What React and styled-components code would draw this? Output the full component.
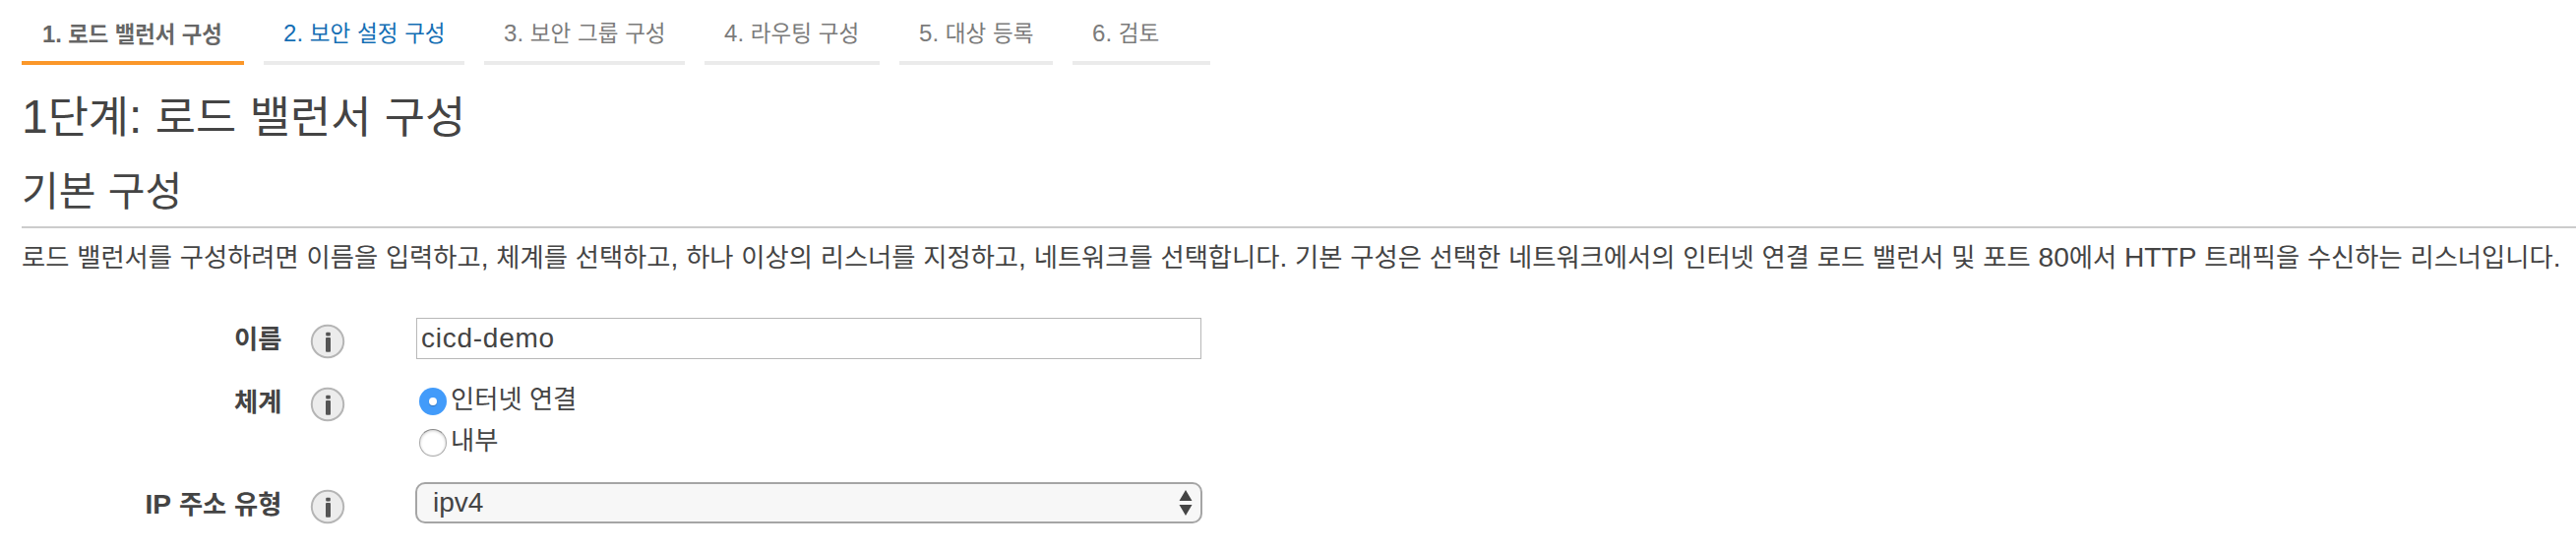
import React from "react";
import styled, { createGlobalStyle } from "styled-components";

const GlobalStyle = createGlobalStyle`
  * { box-sizing: border-box; }
  body { margin: 0; background: #fff; overflow: hidden; }
`;

const Page = styled.main`
  height: 560px;
  padding-left: 22px;
  color: #444;
  font-family: "Liberation Sans", "Noto Sans CJK KR", sans-serif;
  font-size: 26.3px;
  white-space: nowrap;
  overflow: hidden;
`;

const Latin = styled.span`
  font-size: 1.07em;
`;

const Steps = styled.nav`
  display: flex;
  gap: 20px;
  height: 66px;
`;

const Step = styled.div`
  width: ${(p) => p.$width}px;
  height: 66px;
  padding: ${(p) => (p.$active ? "18px 0 0 21px" : "17px 0 0 20px")};
  border-bottom: 4px solid ${(p) => (p.$active ? "#fb9729" : "#ebebeb")};
  color: ${(p) => p.$color};
  font-size: ${(p) => (p.$active ? 22.3 : 22.5)}px;
  font-weight: ${(p) => (p.$active ? 700 : 400)};
  line-height: 34px;
  word-spacing: ${(p) => (p.$active ? 0.2 : 0.5)}px;
`;

const Title = styled.h1`
  margin: 23px 0 0;
  font-size: 44.8px;
  font-weight: 400;
  line-height: 60px;
  word-spacing: 1px;
`;

const SectionTitle = styled.h2`
  margin: 15px 0 0;
  height: 68px;
  border-bottom: 2px solid #ccc;
  font-size: 41px;
  font-weight: 400;
  line-height: 62px;
  word-spacing: 1px;
`;

const Description = styled.p`
  margin: 10px 0 0;
  height: 40px;
  line-height: 40px;
  word-spacing: 0.5px;
`;

const Form = styled.form`
  display: flex;
  flex-direction: column;
  margin-top: 41px;
`;

const Row = styled.div`
  display: flex;
  align-items: flex-start;
  height: ${(p) => p.$height}px;
`;

const Heading = styled.div`
  display: flex;
  align-items: flex-start;
  width: 400px;
  padding-top: ${(p) => p.$drop || 0}px;
`;

const Label = styled.label`
  width: 264.5px;
  padding-top: 1px;
  font-weight: 700;
  line-height: 42px;
  text-align: right;
  word-spacing: 0.5px;
`;

const InfoIcon = styled.svg`
  display: block;
  width: 36px;
  height: 36px;
  margin: 6px 0 0 28.5px;
`;

const TextInput = styled.input`
  width: 798px;
  height: 42px;
  margin-left: 1px;
  padding: 0 4px;
  border: 1px solid #b8b8b8;
  background: #fff;
  color: #444;
  font: 28px "Liberation Sans", sans-serif;
  letter-spacing: 0.75px;
  outline: none;
`;

const Options = styled.div`
  display: flex;
  flex-direction: column;
`;

const Option = styled.label`
  display: flex;
  align-items: center;
  gap: 4px;
  height: 42px;
  padding-left: 4px;
  line-height: 43px;
`;

const Radio = styled.span`
  display: flex;
  align-items: center;
  justify-content: center;
  width: 28px;
  height: 28px;
  margin-top: 4px;
  border-radius: 50%;
  border: ${(p) => (p.$checked ? "none" : "1px solid #aaa")};
  border-top-color: #888;
  background: ${(p) => (p.$checked ? "#429bfa" : "#fff")};
  box-shadow: ${(p) => (p.$checked ? "none" : "inset 0 1px 3px rgba(0,0,0,.2)")};
`;

const RadioDot = styled.span`
  width: 8px;
  height: 8px;
  border-radius: 50%;
  background: #fff;
  box-shadow: 0 1px 1px rgba(0, 0, 0, 0.25);
`;

const Select = styled.div`
  display: flex;
  align-items: center;
  justify-content: space-between;
  width: 800px;
  height: 42px;
  padding: 0 8px 0 16px;
  border: 2px solid #a5a5a5;
  border-radius: 10px;
  background: #f7f7f7;
  font-size: 28px;
`;

const Arrows = styled.svg`
  display: block;
`;

const mixed = (text) =>
  text
    .split(/([A-Za-z0-9.,:]+)/)
    .map((part, i) => (i % 2 ? <Latin key={i}>{part}</Latin> : part));

const Info = () => (
  <InfoIcon viewBox="0 0 36 36">
    <circle cx="18" cy="18" r="16.2" fill="#ececec" stroke="#b5b5b5" strokeWidth="2" />
    <rect x="16.2" y="8.8" width="4.6" height="3.6" rx="1" fill="#555" />
    <rect x="16" y="14" width="5" height="14.8" rx="1" fill="#555" />
  </InfoIcon>
);

const steps = [
  { text: "1. 로드 밸런서 구성", width: 226, color: "#666", active: true },
  { text: "2. 보안 설정 구성", width: 204, color: "#146eb4" },
  { text: "3. 보안 그룹 구성", width: 204, color: "#7b7b7b" },
  { text: "4. 라우팅 구성", width: 178, color: "#7b7b7b" },
  { text: "5. 대상 등록", width: 156, color: "#7b7b7b" },
  { text: "6. 검토", width: 140, color: "#7b7b7b" },
];

export default function App() {
  return (
    <Page>
      <GlobalStyle />
      <Steps>
        {steps.map((s) => (
          <Step key={s.text} $width={s.width} $color={s.color} $active={s.active}>
            {mixed(s.text)}
          </Step>
        ))}
      </Steps>
      <Title>{mixed("1단계: 로드 밸런서 구성")}</Title>
      <SectionTitle>기본 구성</SectionTitle>
      <Description>
        {mixed(
          "로드 밸런서를 구성하려면 이름을 입력하고, 체계를 선택하고, 하나 이상의 리스너를 지정하고, 네트워크를 선택합니다. 기본 구성은 선택한 네트워크에서의 인터넷 연결 로드 밸런서 및 포트 80에서 HTTP 트래픽을 수신하는 리스너입니다."
        )}
      </Description>
      <Form>
        <Row $height={62}>
          <Heading>
            <Label>이름</Label>
            <Info />
          </Heading>
          <TextInput defaultValue="cicd-demo" />
        </Row>
        <Row $height={105}>
          <Heading $drop={2}>
            <Label>체계</Label>
            <Info />
          </Heading>
          <Options>
            <Option>
              <Radio $checked>
                <RadioDot />
              </Radio>
              인터넷 연결
            </Option>
            <Option>
              <Radio />
              내부
            </Option>
          </Options>
        </Row>
        <Row $height={44}>
          <Heading $drop={1}>
            <Label>{mixed("IP 주소 유형")}</Label>
            <Info />
          </Heading>
          <Select>
            ipv4
            <Arrows width="14" height="26" viewBox="0 0 14 26">
              <path d="M7 0 L13.5 11 H.5 Z M.5 15 H13.5 L7 26 Z" fill="#444" />
            </Arrows>
          </Select>
        </Row>
      </Form>
    </Page>
  );
}
